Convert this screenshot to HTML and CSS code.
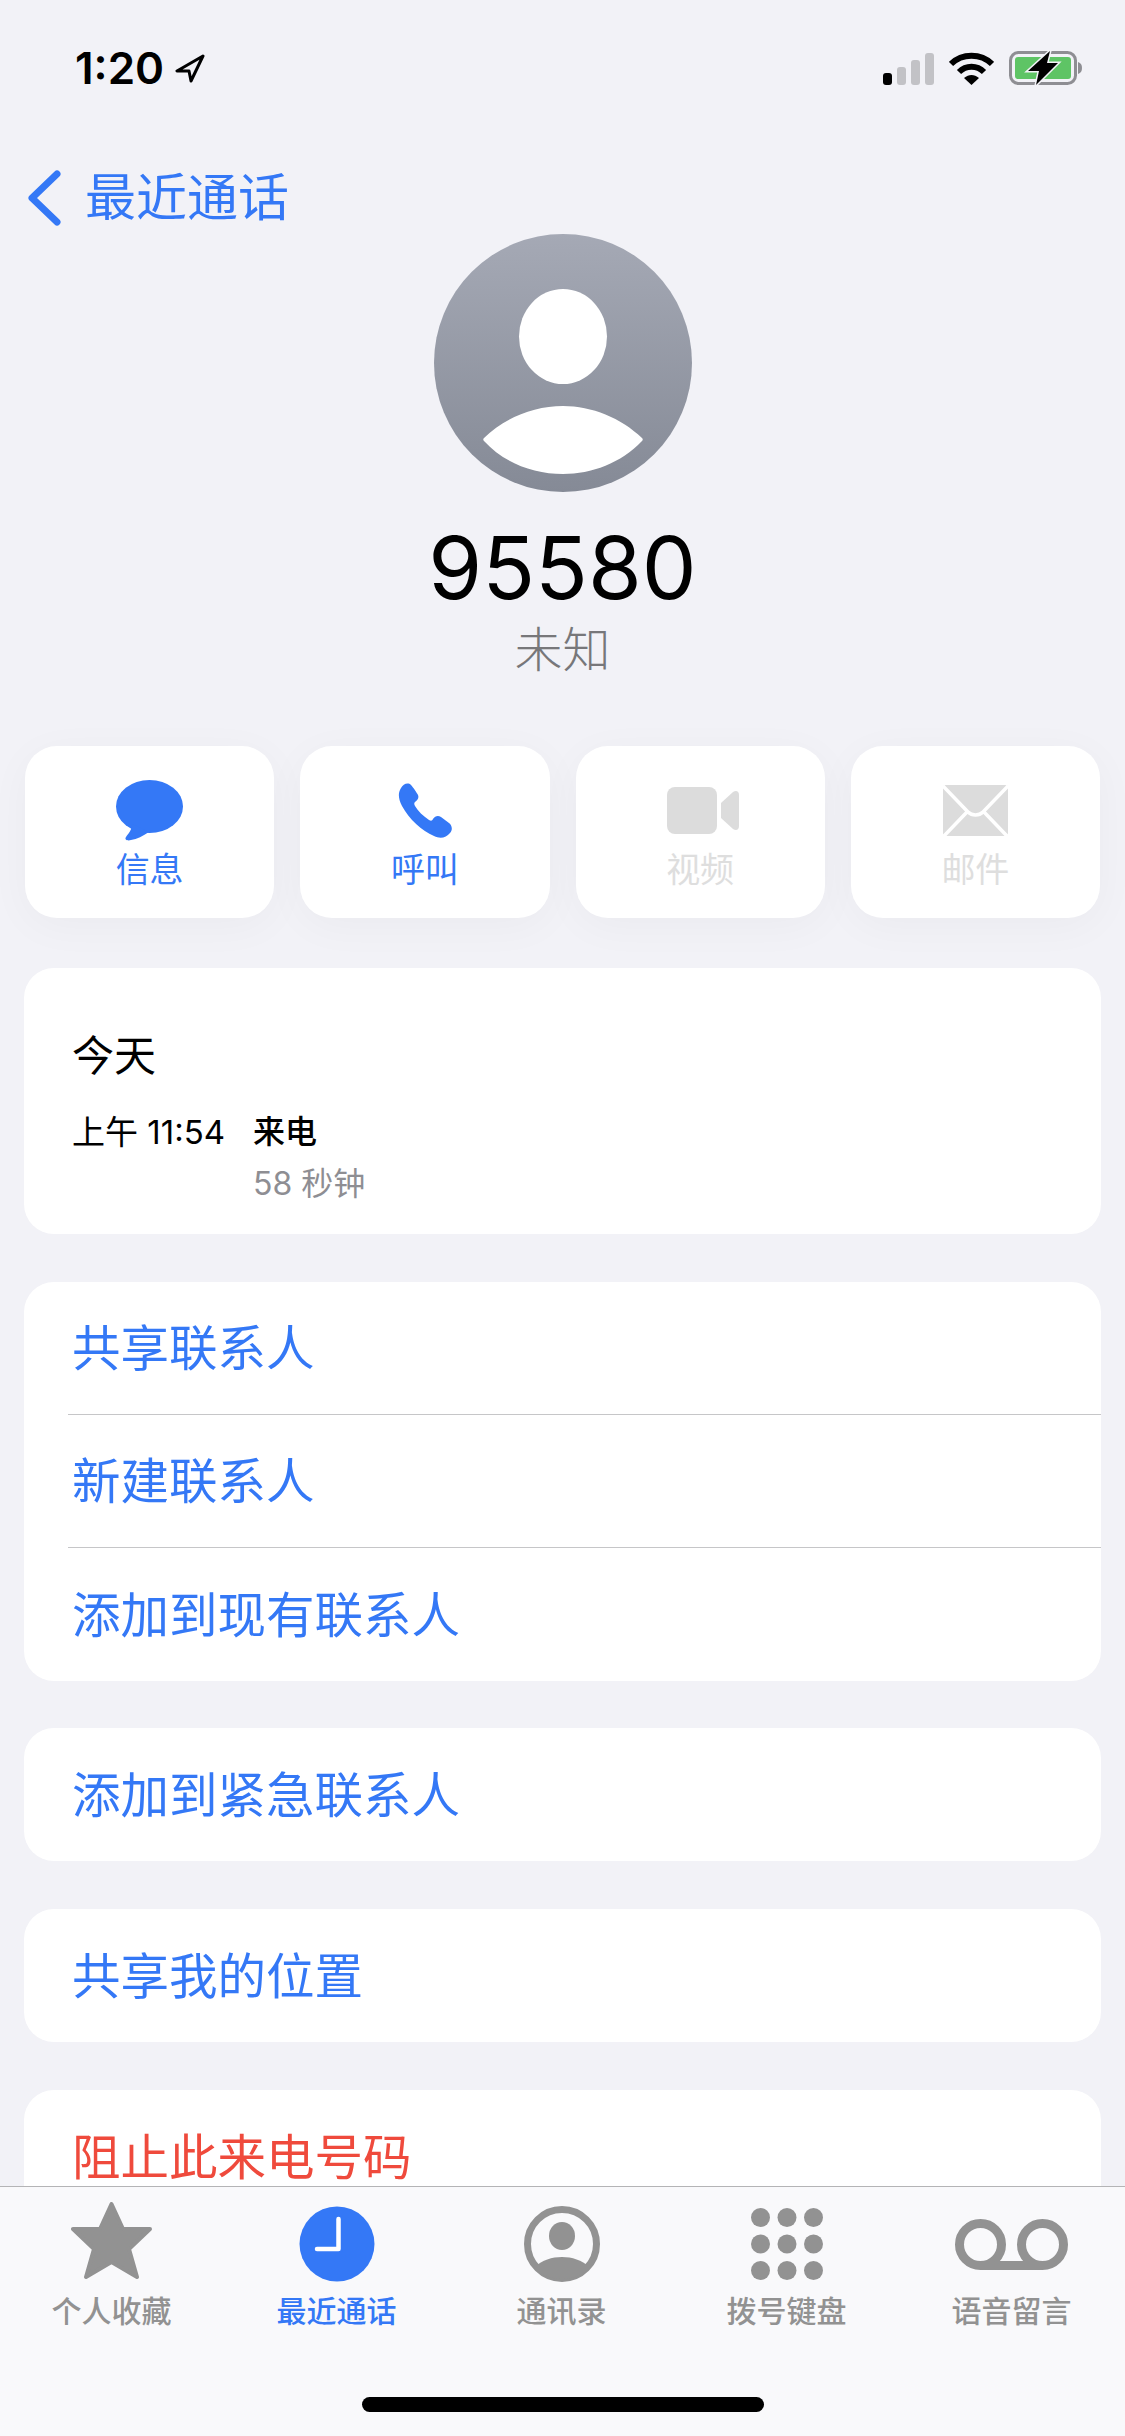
FILE: index.html
```html
<!DOCTYPE html>
<html lang="zh-CN">
<head>
  <meta charset="UTF-8">
  <meta name="viewport" content="width=device-width, initial-scale=1.0">
  <title>95580</title>
  <link rel="stylesheet" href="styles.css">
</head>
<body>
  <div class="screen">
    <main class="content">
      <div class="status-bar">
        <div class="status-left">
          <span class="time">1:20</span>
          <svg width="31" height="29" viewBox="0 0 31 29"><path d="M29 2 L3 17 L15 17 L17 27 Z" fill="none" stroke="#000" stroke-width="3" stroke-linejoin="round"/></svg>
        </div>
        <div class="status-right">
          <div class="signal">
            <span class="bar bar-on bar-1"></span>
            <span class="bar bar-2"></span>
            <span class="bar bar-3"></span>
            <span class="bar bar-4"></span>
          </div>
          <svg width="45" height="33" viewBox="0 0 45 33">
            <path d="M2 12 C13 1 32 1 43 12" fill="none" stroke="#000" stroke-width="6"/>
            <path d="M10 20 C17 13 28 13 35 20" fill="none" stroke="#000" stroke-width="6"/>
            <path d="M15 26 L22.5 33 L30 26 C25 22 20 22 15 26Z"/>
          </svg>
          <svg width="73" height="34" viewBox="0 0 73 34">
            <rect x="1.5" y="1.5" width="65" height="31" rx="8" fill="none" stroke="#8e8e93" stroke-width="3"/>
            <rect x="6" y="6" width="56" height="22" rx="3" fill="#5ec465"/>
            <path d="M69 11 C72 12 73 14 73 17 C73 20 72 22 69 23Z" fill="#8e8e93"/>
            <path d="M41 0 L19 20 L30 20 L27 34 L49 12 L38 12Z" stroke="#f2f2f7" stroke-width="3" paint-order="stroke"/>
          </svg>
        </div>
      </div>

      <div class="nav">
        <svg width="34" height="56" viewBox="0 0 34 56"><path d="M30 4 L5 28 L30 52" fill="none" stroke="#3478f6" stroke-width="7" stroke-linecap="round" stroke-linejoin="round"/></svg>
        <span class="nav-title">最近通话</span>
      </div>

      <svg class="avatar" width="258" height="258" viewBox="0 0 258 258">
        <defs>
          <linearGradient id="avatarFill" x1="0" y1="0" x2="0" y2="1">
            <stop offset="0" stop-color="#a5a9b5"/>
            <stop offset="1" stop-color="#858a96"/>
          </linearGradient>
        </defs>
        <circle cx="129" cy="129" r="129" fill="url(#avatarFill)"/>
        <ellipse cx="129" cy="102.5" rx="44" ry="47.5" fill="#fff"/>
        <path d="M50 204 C70 184 100 172 129 172 C158 172 187 184 208 204 C209 205 209 206 208 207 C187 229 158 240 129 240 C100 240 70 229 50 207 C49 206 49 205 50 204Z" fill="#fff"/>
      </svg>
      <div class="caller-number">95580</div>
      <div class="caller-label">未知</div>

      <div class="actions">
        <div class="action">
          <div class="action-icon">
            <svg width="67" height="61" viewBox="0 0 67 61">
              <ellipse cx="33.5" cy="26.5" rx="33.5" ry="26.5" fill="#3478f6"/>
              <path d="M16 44 C16 50 12 54 10 57 C8 60 12 61 15 60 C21 59 27 56 33 52 Z" fill="#3478f6"/>
            </svg>
          </div>
          <div class="action-label">信息</div>
        </div>
        <div class="action">
          <div class="action-icon">
            <svg width="54" height="55" viewBox="0 0 54 55"><path d="M3 5 C5 1 10 -1 13 2 C15 4 19 10 20 12 C21 15 20 17 17 19 C16 20 16 21 17 23 C20 28 25 33 31 37 C33 38 34 38 35 36 C37 33 40 32 43 34 L51 40 C54 42 55 47 52 50 C48 55 42 56 36 53 C24 48 11 36 4 23 C0 15 0 10 3 5 Z" fill="#3478f6"/></svg>
          </div>
          <div class="action-label">呼叫</div>
        </div>
        <div class="action action-off">
          <div class="action-icon action-icon-video">
            <svg width="72" height="47" viewBox="0 0 72 47">
              <rect width="50" height="47" rx="8" fill="#dcdcdc"/>
              <path d="M54 16 L66 5 C69 3 72 4 72 8 V39 C72 43 69 44 66 42 L54 31 Z" fill="#dcdcdc"/>
            </svg>
          </div>
          <div class="action-label">视频</div>
        </div>
        <div class="action action-off">
          <div class="action-icon">
            <svg width="65" height="51" viewBox="0 0 65 51">
              <rect width="65" height="51" rx="3" fill="#dcdcdc"/>
              <path d="M0 1 L25 27 C29 31 36 31 40 27 L65 1" fill="none" stroke="#fff" stroke-width="3.5"/>
              <path d="M24 27 L1 51 M41 27 L64 51" fill="none" stroke="#fff" stroke-width="3.5"/>
            </svg>
          </div>
          <div class="action-label">邮件</div>
        </div>
      </div>

      <section class="card call-log">
        <div class="log-day">今天</div>
        <div class="log-entry">
          <div class="log-time">上午 11:54</div>
          <div>
            <div class="log-type">来电</div>
            <div class="log-length">58 秒钟</div>
          </div>
        </div>
      </section>

      <section class="card">
        <div class="row row-line">共享联系人</div>
        <div class="row row-line">新建联系人</div>
        <div class="row">添加到现有联系人</div>
      </section>

      <section class="card card-tight">
        <div class="row">添加到紧急联系人</div>
      </section>

      <section class="card">
        <div class="row">共享我的位置</div>
      </section>

      <section class="card">
        <div class="row row-danger">阻止此来电号码</div>
      </section>
    </main>

    <footer class="tabbar">
      <div class="tabs">
        <div class="tab">
          <div class="tab-icon">
            <svg class="star" width="82" height="78" viewBox="0 0 82 78"><path d="M40.5 2 L52 27 L79 27 L58 47 L66 75 L40.5 60 L15 75 L23 47 L2 27 L29 27 Z" fill="#929292" stroke="#929292" stroke-width="4" stroke-linejoin="round"/></svg>
          </div>
          <div class="tab-label">个人收藏</div>
        </div>
        <div class="tab tab-active">
          <div class="tab-icon">
            <svg width="76" height="76" viewBox="0 0 76 76">
              <circle cx="38" cy="38" r="37.5" fill="#3478f6"/>
              <path d="M39.5 13 V43 H18" fill="none" stroke="#fff" stroke-width="4.5" stroke-linecap="round" stroke-linejoin="round"/>
            </svg>
          </div>
          <div class="tab-label">最近通话</div>
        </div>
        <div class="tab">
          <div class="tab-icon">
            <svg width="76" height="76" viewBox="0 0 76 76">
              <circle cx="38" cy="38" r="34.5" fill="none" stroke="#929292" stroke-width="7"/>
              <ellipse cx="38" cy="30" rx="13" ry="14" fill="#929292"/>
              <path d="M11 61 C18 54 28 51 38 51 C48 51 58 54 65 61 C58 70 48 73 38 73 C28 73 18 70 11 61Z" fill="#929292"/>
            </svg>
          </div>
          <div class="tab-label">通讯录</div>
        </div>
        <div class="tab">
          <div class="tab-icon">
            <svg width="72" height="72" viewBox="0 0 72 72" fill="#929292">
              <circle cx="9.5" cy="9.5" r="9.5"/><circle cx="36" cy="9.5" r="9.5"/><circle cx="62.5" cy="9.5" r="9.5"/>
              <circle cx="9.5" cy="36" r="9.5"/><circle cx="36" cy="36" r="9.5"/><circle cx="62.5" cy="36" r="9.5"/>
              <circle cx="9.5" cy="62.5" r="9.5"/><circle cx="36" cy="62.5" r="9.5"/><circle cx="62.5" cy="62.5" r="9.5"/>
            </svg>
          </div>
          <div class="tab-label">拨号键盘</div>
        </div>
        <div class="tab">
          <div class="tab-icon">
            <svg width="113" height="51" viewBox="0 0 113 51" fill="none" stroke="#929292" stroke-width="9">
              <circle cx="25.5" cy="25.5" r="21"/>
              <circle cx="87.5" cy="25.5" r="21"/>
              <path d="M25.5 46.5 H87.5"/>
            </svg>
          </div>
          <div class="tab-label">语音留言</div>
        </div>
      </div>
      <div class="home-bar"></div>
    </footer>
  </div>
</body>
</html>
```

FILE: styles.css
```css
body {
  margin: 0;
  background: #f2f2f7;
  font-family: Inter, "Noto Sans CJK SC", sans-serif;
  color: #000;
}
.screen {
  width: 1125px;
  height: 2436px;
  display: flex;
  flex-direction: column;
  overflow: hidden;
}
.content {
  flex: 1;
  min-height: 0;
  overflow: hidden;
}
.status-bar {
  height: 136px;
  padding: 0 43px 0 75px;
  box-sizing: border-box;
  display: flex;
  align-items: center;
  justify-content: space-between;
}
.status-left {
  display: flex;
  align-items: center;
  gap: 10px;
}
.time {
  font-size: 44px;
  font-weight: 600;
  line-height: 50px;
}
.status-right {
  display: flex;
  align-items: center;
  gap: 15px;
}
.signal {
  display: flex;
  align-items: flex-end;
  gap: 5px;
  height: 33px;
}
.bar {
  width: 9px;
  border-radius: 3px;
  background: #c2c2c6;
}
.bar-on {
  background: #000;
}
.bar-1 { height: 12px; }
.bar-2 { height: 18px; }
.bar-3 { height: 25px; }
.bar-4 { height: 32px; }
.nav {
  height: 98px;
  padding: 34px 0 8px 27px;
  box-sizing: border-box;
  display: flex;
  align-items: center;
  gap: 24px;
}
.nav-title {
  font-size: 51px;
  line-height: 56px;
  color: #3478f6;
}
.avatar {
  display: block;
  margin: 0 auto;
}
.caller-number {
  margin-top: 36px;
  font-size: 87px;
  line-height: 80px;
  text-align: center;
}
.caller-label {
  margin-top: 12px;
  font-size: 48px;
  line-height: 60px;
  text-align: center;
  color: #77777a;
  font-weight: 300;
}
.actions {
  margin-top: 66px;
  padding: 0 25px;
  display: grid;
  grid-template-columns: repeat(4, 1fr);
  gap: 26px;
}
.action {
  height: 172px;
  padding-top: 33px;
  box-sizing: border-box;
  background: #fff;
  border-radius: 32px;
  box-shadow: 0 8px 44px rgba(0,0,0,0.035);
  text-align: center;
  color: #3478f6;
}
.action-off {
  color: #dedede;
}
.action-icon {
  height: 62px;
  display: flex;
  align-items: center;
  justify-content: center;
}
.action-icon-video {
  padding-left: 5px;
}
.action-label {
  margin-top: 9px;
  font-size: 34px;
  line-height: 40px;
}
.card {
  margin: 48px 24px 0;
  background: #fff;
  border-radius: 30px;
  overflow: hidden;
}
.card-tight {
  margin-top: 47px;
}
.call-log {
  margin-top: 50px;
  height: 266px;
  padding: 62px 48px 0;
  box-sizing: border-box;
}
.log-day {
  font-size: 42px;
  line-height: 52px;
}
.log-entry {
  margin-top: 28px;
  display: flex;
}
.log-time {
  width: 181px;
  font-size: 33px;
  line-height: 44px;
}
.log-type {
  font-size: 32px;
  line-height: 44px;
  font-weight: 500;
}
.log-length {
  margin-top: 8px;
  font-size: 32px;
  line-height: 44px;
  color: #8e8e93;
}
.row {
  height: 133px;
  margin-left: 44px;
  padding: 2px 0 0 4px;
  box-sizing: border-box;
  display: flex;
  align-items: center;
  font-size: 48.5px;
  line-height: 56px;
  color: #3478f6;
}
.row-line {
  border-bottom: 1px solid #c6c6c8;
}
.row-danger {
  color: #ef4a3c;
}
.tabbar {
  height: 250px;
  flex-shrink: 0;
  box-sizing: border-box;
  padding-top: 15px;
  border-top: 1px solid #b4b4b6;
  background: #f9f9fb;
}
.tabs {
  display: grid;
  grid-template-columns: repeat(5, 225px);
  margin-left: -1px;
}
.tab {
  text-align: center;
  color: #929292;
}
.tab-active {
  color: #3478f6;
}
.tab-icon {
  height: 84px;
  display: flex;
  align-items: center;
  justify-content: center;
}
.star {
  align-self: flex-start;
}
.tab-label {
  margin-top: 5px;
  font-size: 30px;
  line-height: 40px;
  font-weight: 500;
}
.home-bar {
  width: 402px;
  height: 15px;
  margin: 66px auto 0;
  border-radius: 8px;
  background: #000;
}
```
